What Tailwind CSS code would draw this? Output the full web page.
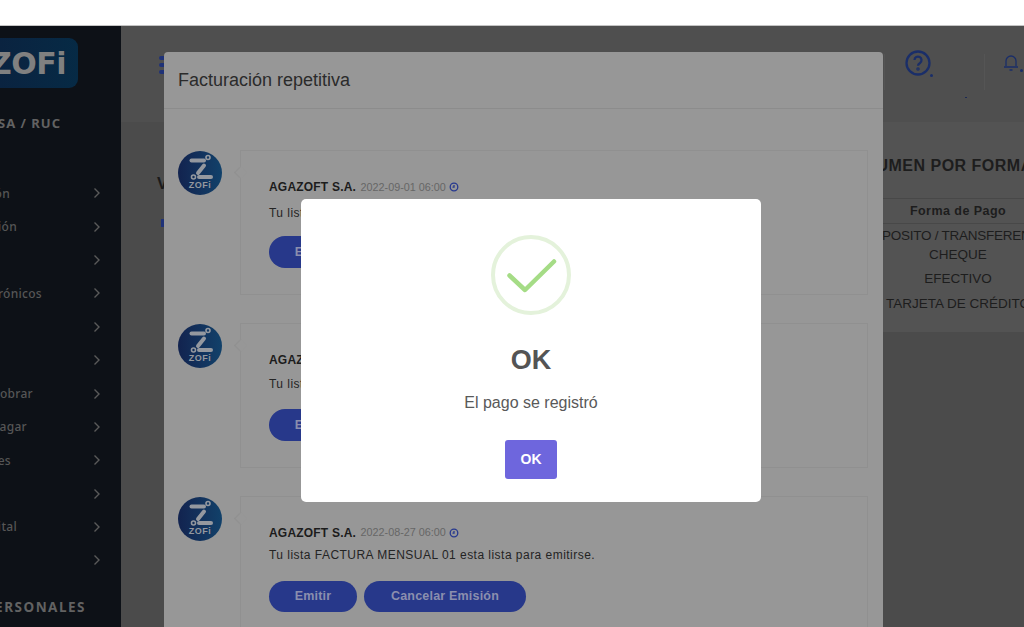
<!DOCTYPE html>
<html lang="en">
<head>
  <meta charset="UTF-8">
  <title>Facturación repetitiva</title>
  <script src="https://cdn.jsdelivr.net/npm/@tailwindcss/browser@4"></script>
</head>
<body class="relative h-[627px] overflow-hidden bg-white font-['Liberation_Sans',Arial,sans-serif]">
  <div class="h-[26px] bg-white border-b border-[#c4c4c4]"></div>

  <div class="flex h-[601px]">
    <!-- sidebar -->
    <aside class="w-[121px] shrink-0 overflow-hidden bg-[#0d1117] font-['Noto_Sans',sans-serif] text-[#565656]">
      <div class="mt-[12px] w-[78px] h-[50px] flex items-center justify-end pr-[12px] rounded-r-[9px] bg-gradient-to-r from-[#0a2340] to-[#062a45]">
        <span class="whitespace-nowrap font-['DejaVu_Sans',sans-serif] font-bold text-[30px] tracking-[-0.5px] text-[#808080]">AGAZOFi</span>
      </div>
      <div class="mt-[26px] w-[61px] flex justify-end whitespace-nowrap font-bold text-[13px] tracking-[1px] text-[#626262]">EMPRESA / RUC</div>

      <nav class="mt-[43px]">
        <div class="flex items-center h-[33.4px]"><span class="w-[10px] pt-[1px] flex justify-end whitespace-nowrap text-[12px] font-medium tracking-[0.3px]">Facturación</span><svg class="ml-[82px] w-[10px] h-[12px]" viewBox="0 0 10 12" fill="none" stroke="#5a5a5a" stroke-width="1.4"><path d="M2.5 1.5 7 6l-4.500 4.500"/></svg></div>
        <div class="flex items-center h-[33.4px]"><span class="w-[17px] pt-[1px] flex justify-end whitespace-nowrap text-[12px] font-medium tracking-[0.3px]">Cotización</span><svg class="ml-[75px] w-[10px] h-[12px]" viewBox="0 0 10 12" fill="none" stroke="#5a5a5a" stroke-width="1.4"><path d="M2.5 1.5 7 6l-4.500 4.500"/></svg></div>
        <div class="flex items-center h-[33.4px] pl-[92px]"><svg class="w-[10px] h-[12px]" viewBox="0 0 10 12" fill="none" stroke="#5a5a5a" stroke-width="1.4"><path d="M2.5 1.5 7 6l-4.500 4.500"/></svg></div>
        <div class="flex items-center h-[33.4px]"><span class="w-[42px] pt-[1px] flex justify-end whitespace-nowrap text-[12px] font-medium tracking-[0.3px]">Documentos electrónicos</span><svg class="ml-[50px] w-[10px] h-[12px]" viewBox="0 0 10 12" fill="none" stroke="#5a5a5a" stroke-width="1.4"><path d="M2.5 1.5 7 6l-4.500 4.500"/></svg></div>
        <div class="flex items-center h-[33.4px] pl-[92px]"><svg class="w-[10px] h-[12px]" viewBox="0 0 10 12" fill="none" stroke="#5a5a5a" stroke-width="1.4"><path d="M2.5 1.5 7 6l-4.500 4.500"/></svg></div>
        <div class="flex items-center h-[33.4px] pl-[92px]"><svg class="w-[10px] h-[12px]" viewBox="0 0 10 12" fill="none" stroke="#5a5a5a" stroke-width="1.4"><path d="M2.5 1.5 7 6l-4.500 4.500"/></svg></div>
        <div class="flex items-center h-[33.4px]"><span class="w-[33px] pt-[1px] flex justify-end whitespace-nowrap text-[12px] font-medium tracking-[0.3px]">Cuentas por cobrar</span><svg class="ml-[59px] w-[10px] h-[12px]" viewBox="0 0 10 12" fill="none" stroke="#5a5a5a" stroke-width="1.4"><path d="M2.5 1.5 7 6l-4.500 4.500"/></svg></div>
        <div class="flex items-center h-[33.4px]"><span class="w-[27px] pt-[1px] flex justify-end whitespace-nowrap text-[12px] font-medium tracking-[0.3px]">Cuentas por pagar</span><svg class="ml-[65px] w-[10px] h-[12px]" viewBox="0 0 10 12" fill="none" stroke="#5a5a5a" stroke-width="1.4"><path d="M2.5 1.5 7 6l-4.500 4.500"/></svg></div>
        <div class="flex items-center h-[33.4px]"><span class="w-[11px] pt-[1px] flex justify-end whitespace-nowrap text-[12px] font-medium tracking-[0.3px]">Reportes</span><svg class="ml-[81px] w-[10px] h-[12px]" viewBox="0 0 10 12" fill="none" stroke="#5a5a5a" stroke-width="1.4"><path d="M2.5 1.5 7 6l-4.500 4.500"/></svg></div>
        <div class="flex items-center h-[33.4px] pl-[92px]"><svg class="w-[10px] h-[12px]" viewBox="0 0 10 12" fill="none" stroke="#5a5a5a" stroke-width="1.4"><path d="M2.5 1.5 7 6l-4.500 4.500"/></svg></div>
        <div class="flex items-center h-[33.4px]"><span class="w-[17px] flex justify-end whitespace-nowrap text-[12px] font-medium tracking-[0.3px]">Capital</span><svg class="ml-[75px] w-[10px] h-[12px]" viewBox="0 0 10 12" fill="none" stroke="#5a5a5a" stroke-width="1.4"><path d="M2.5 1.5 7 6l-4.500 4.500"/></svg></div>
        <div class="flex items-center h-[33.4px] pl-[92px]"><svg class="w-[10px] h-[12px]" viewBox="0 0 10 12" fill="none" stroke="#5a5a5a" stroke-width="1.4"><path d="M2.5 1.5 7 6l-4.500 4.500"/></svg></div>
      </nav>
      <div class="mt-[20px] w-[86px] flex justify-end whitespace-nowrap font-bold text-[13.500px] tracking-[1.5px] text-[#626262]">DATOS PERSONALES</div>
    </aside>

    <!-- page behind the modals -->
    <main class="flex-1 min-w-0 overflow-hidden bg-[#4b4b4b]">
      <header class="relative h-[96px] bg-[#4f4f4f] flex items-start pl-[38px] pt-[28px]">
        <svg class="w-[8px] h-[20px] mt-[1px]" viewBox="0 0 8 20" fill="#1f3278"><rect x="0" y="1" width="8" height="4" rx="2"/><rect x="0" y="8" width="8" height="4" rx="2"/><rect x="0" y="15" width="8" height="4" rx="2"/></svg>
        <div class="ml-auto flex items-start">
          <div class="relative w-[100px] h-[36px] border-l border-[#555]">
            <svg class="ml-[19px] w-[28px] h-[28px] -mt-[5px]" viewBox="0 0 28 28" fill="none" stroke="#1a2e69" stroke-width="2.300"><circle cx="14" cy="14" r="11.500"/><path d="M10.500 11a3.500 3.500 0 1 1 5.500 3c-1.300.8-2 1.500-2 2.800"/><circle cx="14" cy="20" r=".6"/></svg>
            <span class="absolute left-[44.500px] top-[20px] w-[3px] h-[3px] rounded-full bg-[#1a2e69]"></span>
          </div>
          <div class="relative w-[40px] h-[36px] border-l border-[#555]">
            <svg class="ml-[18px] w-[16px] h-[18px]" viewBox="0 0 16 18" fill="none" stroke="#1a2e69" stroke-width="1.300"><path d="M3 12V7a5 5 0 0 1 10 0v5M1 13h14M6.500 16h3"/></svg>
            <span class="absolute left-[34.500px] top-[15px] w-[3px] h-[3px] rounded-full bg-[#1a2e69]"></span>
          </div>
        </div>
        <span class="absolute left-[844px] top-[71px] w-[2px] h-[1px] bg-[#1c2a55]"></span>
      </header>
      <div class="flex items-start">
        <div class="flex-1 pl-[36px] pt-[50px]">
          <div class="font-bold text-[16px] text-[#1a1a1a]">Ventas</div>
          <div class="mt-[23px] ml-[4px] w-[6px] h-[8px] bg-[#1f3278]"></div>
        </div>
        <section class="w-[232px] -mr-[50px] h-[210px] bg-[#535353] shrink-0 text-center text-[#1d1d1d] text-[13.500px]">
          <h2 class="pt-[32px] h-[76px] font-bold text-[16px] tracking-[0.5px] whitespace-nowrap">RESUMEN POR FORMA DE PAGO</h2>
          <div class="h-[26px] border-y border-[#484848] font-bold text-[12.500px] leading-[25px] tracking-[0.45px]">Forma de Pago</div>
          <div class="pt-[3px] leading-[18px] whitespace-nowrap tracking-[-0.25px]">DEPOSITO / TRANSFERENCIA</div>
          <div class="leading-[20px]">CHEQUE</div>
          <div class="pt-[5px] leading-[18px]">EFECTIVO</div>
          <div class="pt-[7px] leading-[18px]">TARJETA DE CRÉDITO</div>
        </section>
      </div>
    </main>
  </div>

  <!-- Facturación repetitiva modal -->
  <div class="absolute left-[164px] top-[52px] bottom-0 w-[719px] overflow-hidden rounded-t-[4px] bg-[#979797]">
    <div class="h-[57px] border-b border-[#8c8c8c] pl-[14px] pt-[17px] text-[18px] leading-[22px] text-[#2b2b2b]">Facturación repetitiva</div>

    <div class="pl-[14px] pr-[15px] pt-[41px] flex flex-col gap-[28px]">
      <div class="flex items-start">
        <div class="mt-[1px] w-[44px] h-[44px] shrink-0 rounded-full bg-gradient-to-r from-[#12234f] to-[#11416a]">
          <svg class="w-[44px] h-[44px]" viewBox="0 0 44 44" fill="none" stroke="#94989f" stroke-width="4" stroke-linecap="round"><path d="M13.500 9.500H26"/><path d="M26 14.500 20 22"/><path d="M21 26H33"/><circle cx="30" cy="6.500" r=".8"/><circle cx="15.500" cy="26" r=".8"/><text x="22" y="37" text-anchor="middle" fill="#94989f" stroke="none" font-family="Liberation Sans" font-weight="700" font-size="9" letter-spacing=".5">ZOFi</text></svg>
        </div>
        <article class="relative ml-[18px] flex-1 h-[145px] border border-[#909090] pl-[28px] pt-[28px]">
          <span class="absolute -left-[5px] top-[17px] w-[9px] h-[9px] rotate-45 border-l border-b border-[#909090] bg-[#979797]"></span>
          <div class="flex items-center text-[#1c1c1c] h-[16px]"><b class="font-bold text-[12px] tracking-[0.2px]">AGAZOFT S.A.</b><span class="ml-[4.500px] text-[10.800px] text-[#666]">2022-09-01 06:00</span><svg class="ml-[3px] w-[10px] h-[10px]" viewBox="0 0 10 10" fill="none" stroke="#27398f" stroke-width="1.300"><circle cx="5" cy="5" r="3.800"/><path d="M5 3v2.200H3.500"/></svg></div>
          <p class="mt-[11px] text-[12px] leading-[14px] tracking-[0.47px] text-[#242424]">Tu lista FACTURA MENSUAL 02 esta lista para emitirse.</p>
          <div class="mt-[16px] flex gap-[7px]">
            <button class="w-[88px] h-[32px] rounded-full bg-[#27388a] text-[12.500px] font-bold tracking-[0.2px] text-[#8b8fae]">Emitir</button>
            <button class="w-[162px] h-[32px] rounded-full bg-[#27388a] text-[12.500px] font-bold tracking-[0.2px] text-[#8b8fae]">Cancelar Emisión</button>
          </div>
        </article>
      </div>

      <div class="flex items-start">
        <div class="mt-[1px] w-[44px] h-[44px] shrink-0 rounded-full bg-gradient-to-r from-[#12234f] to-[#11416a]">
          <svg class="w-[44px] h-[44px]" viewBox="0 0 44 44" fill="none" stroke="#94989f" stroke-width="4" stroke-linecap="round"><path d="M13.500 9.500H26"/><path d="M26 14.500 20 22"/><path d="M21 26H33"/><circle cx="30" cy="6.500" r=".8"/><circle cx="15.500" cy="26" r=".8"/><text x="22" y="37" text-anchor="middle" fill="#94989f" stroke="none" font-family="Liberation Sans" font-weight="700" font-size="9" letter-spacing=".5">ZOFi</text></svg>
        </div>
        <article class="relative ml-[18px] flex-1 h-[144.500px] border border-[#909090] pl-[28px] pt-[28px]">
          <span class="absolute -left-[5px] top-[17px] w-[9px] h-[9px] rotate-45 border-l border-b border-[#909090] bg-[#979797]"></span>
          <div class="flex items-center text-[#1c1c1c] h-[16px]"><b class="font-bold text-[12px] tracking-[0.2px]">AGAZOFT S.A.</b><span class="ml-[4.500px] text-[10.800px] text-[#666]">2022-08-30 06:00</span><svg class="ml-[3px] w-[10px] h-[10px]" viewBox="0 0 10 10" fill="none" stroke="#27398f" stroke-width="1.300"><circle cx="5" cy="5" r="3.800"/><path d="M5 3v2.200H3.500"/></svg></div>
          <p class="mt-[9px] text-[12px] leading-[14px] tracking-[0.47px] text-[#242424]">Tu lista FACTURA MENSUAL 02 esta lista para emitirse.</p>
          <div class="mt-[18px] flex gap-[7px]">
            <button class="w-[88px] h-[32px] rounded-full bg-[#27388a] text-[12.500px] font-bold tracking-[0.2px] text-[#8b8fae]">Emitir</button>
            <button class="w-[162px] h-[32px] rounded-full bg-[#27388a] text-[12.500px] font-bold tracking-[0.2px] text-[#8b8fae]">Cancelar Emisión</button>
          </div>
        </article>
      </div>

      <div class="flex items-start">
        <div class="mt-[1px] w-[44px] h-[44px] shrink-0 rounded-full bg-gradient-to-r from-[#12234f] to-[#11416a]">
          <svg class="w-[44px] h-[44px]" viewBox="0 0 44 44" fill="none" stroke="#94989f" stroke-width="4" stroke-linecap="round"><path d="M13.500 9.500H26"/><path d="M26 14.500 20 22"/><path d="M21 26H33"/><circle cx="30" cy="6.500" r=".8"/><circle cx="15.500" cy="26" r=".8"/><text x="22" y="37" text-anchor="middle" fill="#94989f" stroke="none" font-family="Liberation Sans" font-weight="700" font-size="9" letter-spacing=".5">ZOFi</text></svg>
        </div>
        <article class="relative ml-[18px] flex-1 h-[145px] border border-[#909090] pl-[28px] pt-[28px]">
          <span class="absolute -left-[5px] top-[17px] w-[9px] h-[9px] rotate-45 border-l border-b border-[#909090] bg-[#979797]"></span>
          <div class="flex items-center text-[#1c1c1c] h-[16px]"><b class="font-bold text-[12px] tracking-[0.2px]">AGAZOFT S.A.</b><span class="ml-[4.500px] text-[10.800px] text-[#666]">2022-08-27 06:00</span><svg class="ml-[3px] w-[10px] h-[10px]" viewBox="0 0 10 10" fill="none" stroke="#27398f" stroke-width="1.300"><circle cx="5" cy="5" r="3.800"/><path d="M5 3v2.200H3.500"/></svg></div>
          <p class="mt-[7px] text-[12px] leading-[14px] tracking-[0.47px] text-[#242424]">Tu lista FACTURA MENSUAL 01 esta lista para emitirse.</p>
          <div class="mt-[19px] flex gap-[7px]">
            <button class="w-[88px] h-[31px] rounded-full bg-[#27388a] text-[12.500px] font-bold tracking-[0.2px] text-[#8b8fae]">Emitir</button>
            <button class="w-[162px] h-[31px] rounded-full bg-[#27388a] text-[12.500px] font-bold tracking-[0.2px] text-[#8b8fae]">Cancelar Emisión</button>
          </div>
        </article>
      </div>
    </div>
  </div>

  <!-- success alert -->
  <div class="absolute left-[301px] top-[199px] w-[460px] h-[303px] rounded-[5px] bg-white flex flex-col items-center pt-[36px]">
    <svg class="w-[80px] h-[80px]" viewBox="0 0 80 80" fill="none">
      <circle cx="40" cy="40" r="38" stroke="#e4f2db" stroke-width="4"/>
      <path d="M18.500 40.500 34 55 63 26.500" stroke="#a5dc86" stroke-width="4.500" stroke-linecap="round" stroke-linejoin="round"/>
    </svg>
    <h2 class="mt-[27px] text-[27px] leading-[36px] font-bold text-[#545454]">OK</h2>
    <p class="mt-[14px] text-[16px] leading-[22px] text-[#595959]">El pago se registró</p>
    <button class="mt-[26px] w-[52px] h-[39px] rounded-[3px] bg-[#6e66dd] text-[14px] font-bold text-white">OK</button>
  </div>
</body>
</html>
